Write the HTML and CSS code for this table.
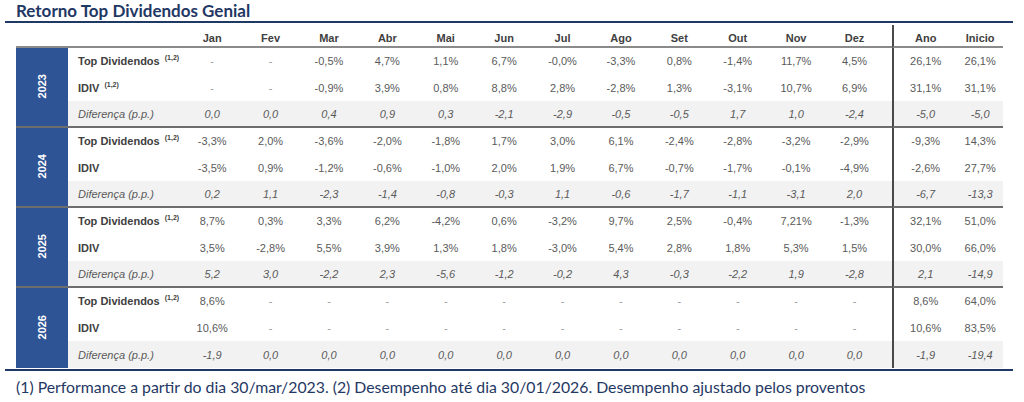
FILE: index.html
```html
<!DOCTYPE html>
<html lang="pt-BR">
<head>
<meta charset="utf-8">
<title>Retorno Top Dividendos Genial</title>
<link rel="stylesheet" href="styles.css">
</head>
<body>
<div class="page">
  <h1 class="title"><span>Retorno Top Dividendos Genial</span></h1>
  <table class="ret">
    <colgroup>
      <col class="c-year"><col class="c-label">
      <col class="c-m"><col class="c-m"><col class="c-m"><col class="c-m"><col class="c-m"><col class="c-m">
      <col class="c-m"><col class="c-m"><col class="c-m"><col class="c-m"><col class="c-m"><col class="c-dez">
      <col class="c-ano"><col class="c-ini">
    </colgroup>
    <thead>
      <tr><th></th><th></th><th>Jan</th><th>Fev</th><th>Mar</th><th>Abr</th><th>Mai</th><th>Jun</th><th>Jul</th><th>Ago</th><th>Set</th><th>Out</th><th>Nov</th><th>Dez</th><th>Ano</th><th>Inicio</th></tr>
    </thead>
    <tbody>
      <tr><td class="year" rowspan="3"><span>2023</span></td><td class="lbl">Top Dividendos <sup>(1,2)</sup></td><td class="na">-</td><td class="na">-</td><td>-0,5%</td><td>4,7%</td><td>1,1%</td><td>6,7%</td><td>-0,0%</td><td>-3,3%</td><td>0,8%</td><td>-1,4%</td><td>11,7%</td><td>4,5%</td><td>26,1%</td><td>26,1%</td></tr>
      <tr><td class="lbl">IDIV <sup>(1,2)</sup></td><td class="na">-</td><td class="na">-</td><td>-0,9%</td><td>3,9%</td><td>0,8%</td><td>8,8%</td><td>2,8%</td><td>-2,8%</td><td>1,3%</td><td>-3,1%</td><td>10,7%</td><td>6,9%</td><td>31,1%</td><td>31,1%</td></tr>
      <tr class="dif sep"><td class="lbl">Diferença (p.p.)</td><td>0,0</td><td>0,0</td><td>0,4</td><td>0,9</td><td>0,3</td><td>-2,1</td><td>-2,9</td><td>-0,5</td><td>-0,5</td><td>1,7</td><td>1,0</td><td>-2,4</td><td>-5,0</td><td>-5,0</td></tr>

      <tr><td class="year" rowspan="3"><span>2024</span></td><td class="lbl">Top Dividendos <sup>(1,2)</sup></td><td>-3,3%</td><td>2,0%</td><td>-3,6%</td><td>-2,0%</td><td>-1,8%</td><td>1,7%</td><td>3,0%</td><td>6,1%</td><td>-2,4%</td><td>-2,8%</td><td>-3,2%</td><td>-2,9%</td><td>-9,3%</td><td>14,3%</td></tr>
      <tr><td class="lbl">IDIV</td><td>-3,5%</td><td>0,9%</td><td>-1,2%</td><td>-0,6%</td><td>-1,0%</td><td>2,0%</td><td>1,9%</td><td>6,7%</td><td>-0,7%</td><td>-1,7%</td><td>-0,1%</td><td>-4,9%</td><td>-2,6%</td><td>27,7%</td></tr>
      <tr class="dif sep"><td class="lbl">Diferença (p.p.)</td><td>0,2</td><td>1,1</td><td>-2,3</td><td>-1,4</td><td>-0,8</td><td>-0,3</td><td>1,1</td><td>-0,6</td><td>-1,7</td><td>-1,1</td><td>-3,1</td><td>2,0</td><td>-6,7</td><td>-13,3</td></tr>

      <tr><td class="year" rowspan="3"><span>2025</span></td><td class="lbl">Top Dividendos <sup>(1,2)</sup></td><td>8,7%</td><td>0,3%</td><td>3,3%</td><td>6,2%</td><td>-4,2%</td><td>0,6%</td><td>-3,2%</td><td>9,7%</td><td>2,5%</td><td>-0,4%</td><td>7,21%</td><td>-1,3%</td><td>32,1%</td><td>51,0%</td></tr>
      <tr><td class="lbl">IDIV</td><td>3,5%</td><td>-2,8%</td><td>5,5%</td><td>3,9%</td><td>1,3%</td><td>1,8%</td><td>-3,0%</td><td>5,4%</td><td>2,8%</td><td>1,8%</td><td>5,3%</td><td>1,5%</td><td>30,0%</td><td>66,0%</td></tr>
      <tr class="dif sep"><td class="lbl">Diferença (p.p.)</td><td>5,2</td><td>3,0</td><td>-2,2</td><td>2,3</td><td>-5,6</td><td>-1,2</td><td>-0,2</td><td>4,3</td><td>-0,3</td><td>-2,2</td><td>1,9</td><td>-2,8</td><td>2,1</td><td>-14,9</td></tr>

      <tr><td class="year last" rowspan="3"><span>2026</span></td><td class="lbl">Top Dividendos <sup>(1,2)</sup></td><td>8,6%</td><td class="na">-</td><td class="na">-</td><td class="na">-</td><td class="na">-</td><td class="na">-</td><td class="na">-</td><td class="na">-</td><td class="na">-</td><td class="na">-</td><td class="na">-</td><td class="na">-</td><td>8,6%</td><td>64,0%</td></tr>
      <tr><td class="lbl">IDIV</td><td>10,6%</td><td class="na">-</td><td class="na">-</td><td class="na">-</td><td class="na">-</td><td class="na">-</td><td class="na">-</td><td class="na">-</td><td class="na">-</td><td class="na">-</td><td class="na">-</td><td class="na">-</td><td>10,6%</td><td>83,5%</td></tr>
      <tr class="dif"><td class="lbl">Diferença (p.p.)</td><td>-1,9</td><td>0,0</td><td>0,0</td><td>0,0</td><td>0,0</td><td>0,0</td><td>0,0</td><td>0,0</td><td>0,0</td><td>0,0</td><td>0,0</td><td>0,0</td><td>-1,9</td><td>-19,4</td></tr>
    </tbody>
  </table>
  <p class="note">(1) Performance a partir do dia 30/mar/2023. (2) Desempenho até dia 30/01/2026. Desempenho ajustado pelos proventos</p>
</div>
</body>
</html>
```
FILE: styles.css
```css
html, body {
  margin: 0;
  padding: 0;
  background: #ffffff;
}

.page {
  width: 1008px;
  margin-left: 5px;
}

.title {
  margin: 0;
  padding: 1px 0 0 11px;
  height: 20px;
  border-bottom: 2px solid #1f3864;
  font-family: Lato, "Open Sans", sans-serif;
  font-weight: 700;
  font-size: 17px;
  line-height: 20px;
  color: #1f3864;
}

.ret {
  margin: 2px 0 0 11px;
  width: 986px;
  table-layout: fixed;
  border-collapse: separate;
  border-spacing: 0;
  font-family: "Liberation Sans", Arial, sans-serif;
  font-size: 11px;
  color: #5a5a5a;
}

.c-year { width: 52px; }
.c-label { width: 115px; }
.c-m { width: 58.4px; }
.c-dez { width: 66.4px; }
.c-ano { width: 66px; }
.c-ini { width: 45px; }

.ret th, .ret td {
  padding: 0;
  text-align: center;
  white-space: nowrap;
}

.ret thead tr { height: 23px; }

.ret th {
  font-weight: 700;
  color: #404040;
  vertical-align: bottom;
  padding-bottom: 2px;
  border-bottom: 2px solid #8a8a8a;
}

.ret tbody tr { height: 26.67px; }

.ret th:nth-last-child(3),
.ret td:nth-last-child(3) {
  padding-right: 8px;
}

.ret th:nth-last-child(2),
.ret td:nth-last-child(2) {
  border-left: 2px solid #4a4a4a;
}

.ret td.lbl {
  text-align: left;
  padding-left: 10px;
  font-weight: 700;
  color: #404040;
}

.ret sup {
  font-size: 7px;
  vertical-align: 5px;
  line-height: 0;
  margin-left: 2px;
}

.ret td.na { color: #9a9a9a; }

.dif td {
  background: #f2f2f2;
  font-style: italic;
  color: #5a5a5a;
}

.dif td.lbl {
  font-weight: 400;
  color: #595959;
}

.sep td {
  border-bottom: 2px solid #6e6e6e;
}

.ret td.year {
  background: #2f5496;
  color: #ffffff;
  font-weight: 700;
  font-size: 11px;
  border-bottom: 2px solid #6e6e6e;
}

.ret td.year.last { border-bottom: 0; }

.ret td.year span {
  display: inline-block;
  writing-mode: vertical-rl;
  transform: rotate(180deg);
}

.note {
  margin: 1px 0 0;
  padding: 6px 0 0 11px;
  border-top: 2px solid #1f3864;
  font-family: Lato, "Open Sans", sans-serif;
  font-size: 15.8px;
  line-height: 20px;
  color: #1f3864;
}
```
